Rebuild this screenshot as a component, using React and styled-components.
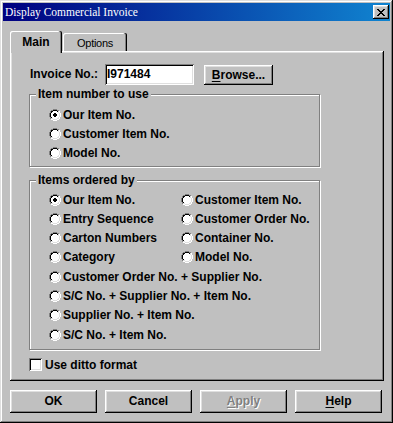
import React from 'react';
import styled, { createGlobalStyle } from 'styled-components';

const Global = createGlobalStyle`
  html, body { margin: 0; padding: 0; background: #c0c0c0; }
  body { font-family: "Liberation Sans", Arial, sans-serif; }
  #root { width: 393px; height: 423px; }
`;

const raisedShadow = 'inset -1px -1px #000, inset 1px 1px #fff, inset -2px -2px #808080, inset 2px 2px #dfdfdf';
const sunkenShadow = 'inset 1px 1px #808080, inset -1px -1px #fff, inset 2px 2px #000, inset -2px -2px #dfdfdf';

const Window = styled.div`
  width: 393px;
  height: 423px;
  box-sizing: border-box;
  padding: 3px;
  background: #c0c0c0;
  box-shadow: inset -1px -1px #000, inset 1px 1px #dfdfdf, inset -2px -2px #808080, inset 2px 2px #fff;
  display: flex;
  flex-direction: column;
  font-family: "Liberation Sans", Arial, sans-serif;
  font-size: 12px;
  font-weight: bold;
  color: #000;
`;

const TitleBar = styled.div`
  height: 18px;
  flex: none;
  display: flex;
  align-items: center;
  justify-content: space-between;
  padding: 0 1px 0 2px;
  background: linear-gradient(to right, #000080, #1084d0);
`;

const TitleText = styled.span`
  font-family: "Liberation Serif", "Times New Roman", serif;
  font-size: 11.5px;
  font-weight: normal;
  color: #fff;
  line-height: 18px;
`;

const CloseButton = styled.div`
  width: 16px;
  height: 14px;
  box-sizing: border-box;
  background: #c0c0c0;
  box-shadow: ${raisedShadow};
  display: flex;
  align-items: center;
  justify-content: center;
  padding-top: 1px;
`;

const Body = styled.div`
  display: flex;
  flex-direction: column;
  padding: 10px 6px 0 7px;
`;

const TabRow = styled.div`
  display: flex;
  align-items: flex-end;
  height: 20px;
`;

const Tab = styled.div`
  position: relative;
  z-index: ${p => (p.$active ? 1 : 0)};
  box-sizing: border-box;
  width: ${p => (p.$active ? 52 : 64)}px;
  height: ${p => (p.$active ? 22 : 18)}px;
  margin-bottom: ${p => (p.$active ? -2 : 0)}px;
  margin-left: ${p => (p.$active ? 0 : 1)}px;
  padding-top: 1px;
  padding-bottom: ${p => (p.$active ? 1 : 0)}px;
  background: #c0c0c0;
  border-radius: 2px 2px 0 0;
  box-shadow: inset -1px 0 #000, inset -2px 0 #808080, inset 1px 1px #fff;
  display: flex;
  align-items: center;
  justify-content: center;
  font-size: ${p => (p.$active ? 12 : 11)}px;
  font-weight: ${p => (p.$active ? 'bold' : 'normal')};
  letter-spacing: ${p => (p.$active ? 0 : -0.3)}px;
`;

const Panel = styled.div`
  box-sizing: border-box;
  height: 330px;
  background: #c0c0c0;
  box-shadow: ${raisedShadow};
  display: flex;
  flex-direction: column;
  padding: 2px 2px 2px 19px;
`;

const InvoiceRow = styled.div`
  display: flex;
  align-items: flex-start;
  margin-top: 11px;
  height: 21px;
`;

const FieldLabel = styled.label`
  width: 75px;
  margin-left: 1px;
  line-height: 21px;
`;

const TextBox = styled.div`
  width: 89px;
  height: 21px;
  box-sizing: border-box;
  background: #fff;
  box-shadow: ${sunkenShadow};
  padding-left: 2px;
  line-height: 21px;
`;

const PushButton = styled.div`
  box-sizing: border-box;
  width: ${p => p.$w}px;
  height: ${p => p.$h}px;
  margin-left: ${p => p.$ml || 0}px;
  margin-top: ${p => p.$mt || 0}px;
  background: #c0c0c0;
  box-shadow: ${raisedShadow};
  display: flex;
  align-items: center;
  justify-content: center;
  color: ${p => (p.$disabled ? '#808080' : '#000')};
  text-shadow: ${p => (p.$disabled ? '1px 1px 0 #fff' : 'none')};
  padding-bottom: 1px;
  u { text-decoration-thickness: 1px; text-underline-offset: 2px; }
`;

const Group = styled.fieldset`
  box-sizing: border-box;
  width: 291px;
  margin: ${p => p.$mt}px 0 0 0;
  padding: 0;
  min-width: 0;
  border: 1px solid #808080;
  box-shadow: 1px 1px 0 #fff, inset 1px 1px 0 #fff;
`;

const Legend = styled.legend`
  margin-left: 6px;
  padding: 0 2px;
  line-height: 13px;
  background: #c0c0c0;
`;

const RadioGrid = styled.div`
  display: grid;
  grid-template-columns: 132px auto;
  grid-auto-rows: 19.3px;
  padding: ${p => p.$pt}px 0 ${p => p.$pb}px 19px;
`;

const RadioItem = styled.div`
  display: flex;
  align-items: center;
  gap: 2px;
  white-space: nowrap;
  grid-column: ${p => (p.$span ? '1 / -1' : 'auto')};
`;

const CheckRow = styled.div`
  display: flex;
  align-items: center;
  gap: 3px;
  margin-top: 8px;
  height: 13px;
`;

const CheckBox = styled.span`
  width: 13px;
  height: 13px;
  flex: none;
  background: #fff;
  box-shadow: ${sunkenShadow};
`;

const ButtonRow = styled.div`
  display: flex;
  gap: 8px;
  margin-top: 9px;
`;

const MASK = [
  '....oooo....',
  '..ooiiiioo..',
  '.oiiwwwwiio.',
  '.oiwwwwwwio.',
  'oiwwwwwwwwio',
  'oiwwwwwwwwio',
  'oiwwwwwwwwio',
  'oiwwwwwwwwio',
  '.oiwwwwwwio.',
  '.oiiwwwwiio.',
  '..ooiiiioo..',
  '....oooo....',
];

const RADIO_PATHS = (() => {
  const p = { '#808080': '', '#fff': '', '#000': '', '#dfdfdf': '' };
  MASK.forEach((row, y) => {
    [...row].forEach((c, x) => {
      if (c === '.') return;
      const dark = x + y <= 10;
      let col = '#fff';
      if (c === 'o') col = dark ? '#808080' : '#fff';
      else if (c === 'i') col = dark ? '#000' : '#dfdfdf';
      p[col] += `M${x} ${y}h1v1h-1z`;
    });
  });
  return p;
})();

const DOT = 'M5 4h2v1h1v2h-1v1h-2v-1h-1v-2h1z';

const RadioIcon = ({ checked }) => (
  <svg width="12" height="12" viewBox="0 0 12 12" shapeRendering="crispEdges" style={{ flex: 'none' }}>
    {Object.entries(RADIO_PATHS).map(([c, d]) => (
      <path key={c} d={d} fill={c} />
    ))}
    {checked && <path d={DOT} fill="#000" />}
  </svg>
);

const CloseGlyph = () => (
  <svg width="8" height="7" viewBox="0 0 8 7" shapeRendering="crispEdges">
    <path
      fill="#000"
      d="M0 0h2v1h-2zM6 0h2v1h-2zM1 1h2v1h-2zM5 1h2v1h-2zM2 2h4v1h-4zM3 3h2v1h-2zM2 4h4v1h-4zM1 5h2v1h-2zM5 5h2v1h-2zM0 6h2v1h-2zM6 6h2v1h-2z"
    />
  </svg>
);

const Radio = ({ checked, span, children }) => (
  <RadioItem $span={span}>
    <RadioIcon checked={checked} />
    <span>{children}</span>
  </RadioItem>
);

export default function App() {
  return (
    <>
      <Global />
      <Window>
        <TitleBar>
          <TitleText>Display Commercial Invoice</TitleText>
          <CloseButton>
            <CloseGlyph />
          </CloseButton>
        </TitleBar>
        <Body>
          <TabRow>
            <Tab $active>Main</Tab>
            <Tab>Options</Tab>
          </TabRow>
          <Panel>
            <InvoiceRow>
              <FieldLabel>Invoice No.:</FieldLabel>
              <TextBox>I971484</TextBox>
              <PushButton $w={69} $h={20} $ml={10} $mt={1}>
                <span><u>B</u>rowse...</span>
              </PushButton>
            </InvoiceRow>
            <Group $mt={3}>
              <Legend>Item number to use</Legend>
              <RadioGrid $pt={4} $pb={3}>
                <Radio checked span>Our Item No.</Radio>
                <Radio span>Customer Item No.</Radio>
                <Radio span>Model No.</Radio>
              </RadioGrid>
            </Group>
            <Group $mt={7}>
              <Legend>Items ordered by</Legend>
              <RadioGrid $pt={3} $pb={5}>
                <Radio checked>Our Item No.</Radio>
                <Radio>Customer Item No.</Radio>
                <Radio>Entry Sequence</Radio>
                <Radio>Customer Order No.</Radio>
                <Radio>Carton Numbers</Radio>
                <Radio>Container No.</Radio>
                <Radio>Category</Radio>
                <Radio>Model No.</Radio>
                <Radio span>Customer Order No. + Supplier No.</Radio>
                <Radio span>S/C No. + Supplier No. + Item No.</Radio>
                <Radio span>Supplier No. + Item No.</Radio>
                <Radio span>S/C No. + Item No.</Radio>
              </RadioGrid>
            </Group>
            <CheckRow>
              <CheckBox />
              <span>Use ditto format</span>
            </CheckRow>
          </Panel>
          <ButtonRow>
            <PushButton $w={87} $h={23}>OK</PushButton>
            <PushButton $w={87} $h={23}>Cancel</PushButton>
            <PushButton $w={87} $h={23} $disabled>
              <span><u>A</u>pply</span>
            </PushButton>
            <PushButton $w={87} $h={23}>
              <span><u>H</u>elp</span>
            </PushButton>
          </ButtonRow>
        </Body>
      </Window>
    </>
  );
}
